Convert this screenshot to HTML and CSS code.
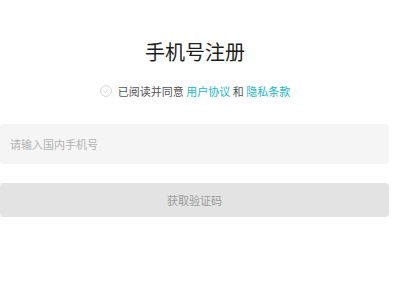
FILE: index.html
```html
<!DOCTYPE html>
<html lang="zh">
<head>
<meta charset="utf-8">
<link rel="stylesheet" href="styles.css">
</head>
<body>
<div class="page">
  <h1 class="title">手机号注册</h1>
  <div class="agree">
    <svg class="check" viewBox="0 0 12 12" width="12" height="12">
      <circle cx="6" cy="6" r="5.4" fill="none" stroke="#cfcfcf" stroke-width="0.9"/>
      <path d="M3.6 6.1 L5.3 7.7 L8.4 4.5" fill="none" stroke="#cfcfcf" stroke-width="0.9" stroke-linecap="round" stroke-linejoin="round"/>
    </svg>
    <span class="agree-text">已阅读并同意 <a class="link">用户协议</a> 和 <a class="link">隐私条款</a></span>
  </div>
  <div class="field">
    <input class="input" type="text" placeholder="请输入国内手机号">
  </div>
  <button class="btn" type="button">获取验证码</button>
</div>
</body>
</html>
```
FILE: styles.css
```css
html, body {
  margin: 0;
  padding: 0;
  background: #ffffff;
}
body {
  font-family: "Noto Sans CJK SC", "Noto Sans", sans-serif;
}
.page {
  width: 390px;
  padding-top: 38px;
  display: flex;
  flex-direction: column;
}
.title {
  margin: 0;
  font-size: 20px;
  line-height: 28px;
  font-weight: 400;
  color: #1e1e1e;
  text-align: center;
}
.agree {
  margin-top: 17px;
  display: flex;
  align-items: center;
  justify-content: center;
  height: 16px;
  font-size: 11px;
  color: #555;
}
.check {
  margin-right: 6px;
  display: block;
}
.link {
  color: #22b5c4;
  text-decoration: none;
}
.field {
  margin-top: 25px;
}
.input {
  box-sizing: border-box;
  width: 389px;
  height: 40px;
  border: none;
  outline: none;
  border-radius: 4px;
  background: #f5f5f5;
  padding: 0 10px;
  font-family: "Noto Sans CJK SC", sans-serif;
  font-size: 11px;
  color: #333;
  display: block;
}
.input::placeholder {
  color: #b3b3b3;
}
.btn {
  margin-top: 19px;
  width: 389px;
  height: 34px;
  border: none;
  border-radius: 4px;
  background: #e3e3e3;
  color: #9a9a9a;
  font-family: "Noto Sans CJK SC", sans-serif;
  font-size: 11px;
  padding: 0;
}
```
